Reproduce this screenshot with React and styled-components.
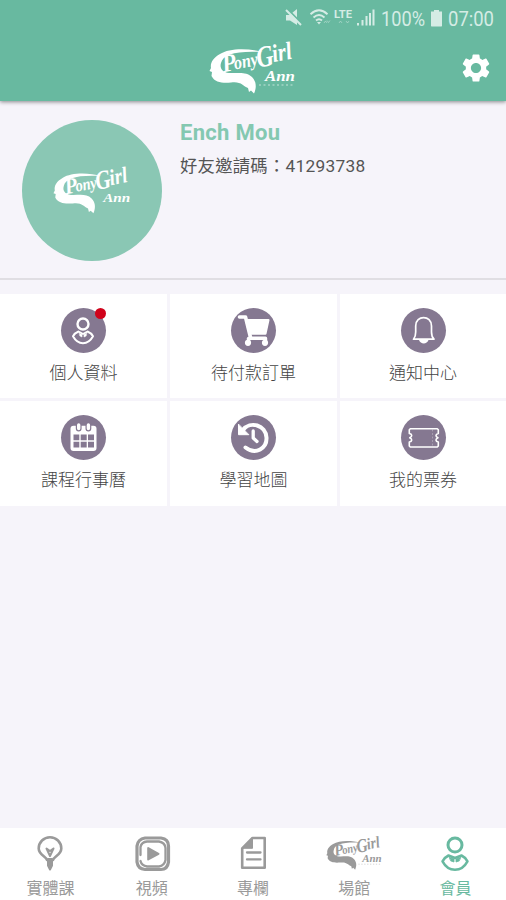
import React from "react"
import styled, { createGlobalStyle, ThemeProvider } from "styled-components"
import { MdSettings } from "react-icons/md"

const theme = {
  color: {
    primary: "#68b9a0",
    primaryLight: "#8ac7b4",
    background: "#f6f4fa",
    badge: "#857891",
    status: "#d5ece5",
    muted: "#9a9a9a",
    alert: "#d0021b"
  }
}

const GlobalStyle = createGlobalStyle`
  * {
    box-sizing: border-box;
  }

  body {
    margin: 0;
    font-family: Roboto, "Noto Sans CJK TC", sans-serif;
  }

  svg {
    display: block;
    flex: none;
    overflow: visible;
  }
`

const StyledPage = styled.div`
  display: flex;
  flex-direction: column;
  height: 900px;
  width: 506px;
  overflow: hidden;
  background: ${({ theme }) => theme.color.background};
`

const StyledHeader = styled.header`
  flex: none;
  height: 101px;
  color: #fff;
  background: ${({ theme }) => theme.color.primary};
  box-shadow: 0 1px 4px rgba(0, 0, 0, 0.45);
`

const StyledStatusBar = styled.div`
  display: flex;
  justify-content: flex-end;
  align-items: center;
  height: 36px;
  padding-right: 12px;
  color: ${({ theme }) => theme.color.status};
`

const StyledStatusText = styled.svg`
  margin-left: ${({ $gap }) => $gap}px;
  font-size: 20px;
  fill: currentColor;
`

const StyledToolbar = styled.div`
  display: grid;
  grid-template-columns: 1fr 88px 1fr;
  align-items: center;
  height: 64px;
  padding: 0 13px 0 12px;
`

const StyledSettings = styled.div`
  grid-column: 3;
  justify-self: end;
`

const StyledToolbarLogo = styled.div`
  grid-column: 2;
`

const StyledProfile = styled.section`
  display: flex;
  flex: none;
  height: 179px;
  padding: 19px 22px 0;
  border-bottom: 2px solid #e0dee3;
`

const StyledAvatar = styled.div`
  display: flex;
  align-items: center;
  justify-content: center;
  flex: none;
  width: 140px;
  height: 141px;
  margin-right: 18px;
  border-radius: 50%;
  color: #fff;
  background: ${({ theme }) => theme.color.primaryLight};
`

const StyledName = styled.h1`
  margin: 0;
  padding-top: 1px;
  font-size: 22px;
  line-height: 24px;
  font-weight: 700;
  letter-spacing: 0.3px;
  color: #84c8b1;
`

const StyledCode = styled.p`
  margin: 8px 0 0;
  font-size: 17.3px;
  line-height: 26px;
  letter-spacing: 0.3px;
  color: #555;
`

const StyledMenu = styled.nav`
  display: grid;
  flex: none;
  grid-template-columns: 167px 167px 166px;
  grid-template-rows: 104px 105px;
  gap: 3px;
  margin-top: 14px;
`

const StyledMenuItem = styled.div`
  display: flex;
  flex-direction: column;
  align-items: center;
  padding-top: 14px;
  background: #fff;
`

const StyledBadge = styled.div`
  position: relative;
  width: 45px;
  height: 45px;
  border-radius: 50%;
  color: #fff;
  background: ${({ theme }) => theme.color.badge};
`

const StyledDot = styled.span`
  position: absolute;
  top: 0;
  right: 0;
  width: 11px;
  height: 11px;
  border-radius: 50%;
  background: ${({ theme }) => theme.color.alert};
`

const StyledMenuLabel = styled.span`
  margin-top: 7px;
  font-size: 17px;
  line-height: 26px;
  font-weight: 300;
  color: #444;
`

const StyledTabs = styled.nav`
  display: grid;
  flex: none;
  grid-template-columns: repeat(5, 1fr);
  height: 72px;
  margin-top: auto;
  background: #fff;
`

const StyledTab = styled.div`
  display: flex;
  flex-direction: column;
  align-items: center;
  padding-top: 7px;
  font-size: 16px;
  line-height: 24px;
  color: ${({ theme, $active }) =>
    $active ? theme.color.primary : theme.color.muted};
`

const StyledTabIcon = styled.div`
  display: flex;
  align-items: center;
  height: 36px;
  margin-bottom: 6px;
`

const StyledLogo = styled.svg`
  font-family: "Liberation Serif", serif;
  font-style: italic;
  font-weight: 700;
  fill: currentColor;
`

const Logo = ({ width, tagline }) => (
  <StyledLogo width={width} height={(width * 50) / 88} viewBox="0 0 88 50">
    <path d="M54 9C39 5 20 5 11 11C4 15 1 20 2 25L0.500 28L3 29L2.500 33C6 40 14 40 22 39.500C32 38 34 43 39 45L40 49L42 47.500L45 50.500C48 44 47 38 43 34C37 28 29 30.500 20 30C13 29 10.500 25 12 20C14 11 28 7.500 54 9Z" />
    <g transform="rotate(-11 16 27)">
      <text x="14" y="29" fontSize="25" textLength="14" lengthAdjust="spacingAndGlyphs">P</text>
      <text x="26" y="28.500" fontSize="19" textLength="24" lengthAdjust="spacingAndGlyphs">ony</text>
      <text x="49" y="31" fontSize="30" textLength="17" lengthAdjust="spacingAndGlyphs">G</text>
      <text x="65" y="28.500" fontSize="25" textLength="20" lengthAdjust="spacingAndGlyphs">irl</text>
    </g>
    <text x="56" y="38" fontSize="15" textLength="30" lengthAdjust="spacingAndGlyphs">Ann</text>
    {tagline && (
      <path d="M50 42H86" fill="none" stroke="currentColor" strokeWidth="1.500" strokeDasharray="2 2.500" opacity="0.4" />
    )}
  </StyledLogo>
)

const Icon = ({ size = 45, children }) => (
  <svg
    width={size}
    height={size}
    viewBox={`0 0 ${size} ${size}`}
    fill="none"
    stroke="currentColor"
    strokeWidth="2"
    strokeLinecap="round"
    strokeLinejoin="round"
  >
    {children}
  </svg>
)

const PersonIcon = () => (
  <Icon>
    <circle cx="22" cy="16" r="5.500" strokeWidth="2.400" />
    <path d="M17.500 23.500C15 24.500 13 26.300 12 28.300C17 37.500 27 37.500 32 28.300C31 26.300 29 24.500 26.500 23.500L22 26Z" strokeWidth="2" />
    <path d="M18.500 25.500L21 26.500V29L19 28ZM25.500 25.500L23 26.500V29L25 28Z" fill="currentColor" strokeWidth="0.600" />
  </Icon>
)

const CartIcon = () => (
  <Icon>
    <path d="M8.500 9H14.500L19.500 29.500" strokeWidth="3.600" />
    <path d="M15 12H37.500L34.500 25.700H18.500Z" fill="currentColor" />
    <path d="M18.500 30.300H34.500V34" strokeWidth="3.400" />
    <path d="M17.500 30.500V34" strokeWidth="3.400" />
    <circle cx="17" cy="34.800" r="3.100" fill="currentColor" stroke="none" />
    <circle cx="34" cy="34.800" r="3.100" fill="currentColor" stroke="none" />
  </Icon>
)

const BellIcon = () => (
  <Icon>
    <path
      d="M12.500 31.200C14.500 29 14.700 27 14.700 24V18C14.700 6.800 30.500 6.800 30.500 18V24C30.500 27 30.700 29 33 31.200Z"
      strokeWidth="1.700"
    />
    <path d="M18 32C19.500 36.500 26 36.500 27.500 32Z" fill="currentColor" stroke="none" />
  </Icon>
)

const CalendarIcon = () => (
  <Icon>
    <rect x="9.500" y="10.800" width="26" height="25.200" rx="3" fill="currentColor" stroke="none" />
    <path d="M17.700 10V13.500M27.400 10V13.500" stroke={theme.color.badge} strokeWidth="5.800" />
    <path d="M17.700 10V13.500M27.400 10V13.500" strokeWidth="3.400" />
    <path
      d="M12.500 19.500h5.800v5.800h-5.800zM19.700 19.500h6v5.800h-6zM27 19.500h6v5.800h-6zM12.500 26.800h5.800v5.800h-5.800zM19.700 26.800h6v5.800h-6zM27 26.800h6v5.800h-6z"
      fill={theme.color.badge}
      stroke="none"
    />
  </Icon>
)

const HistoryIcon = () => (
  <Icon>
    <path d="M14.500 32.500C25 40.500 36 33 35.500 22.700C35 10 19 5.500 12 15" strokeWidth="4" />
    <path d="M7.500 9.500V19.700H17.500Z" fill="currentColor" strokeWidth="1" />
    <path d="M22.200 16V23L26 26.500" strokeWidth="3.300" />
  </Icon>
)

const TicketIcon = () => (
  <Icon>
    <path
      d="M9.300 13.700H36.300L37.300 14.700V18.500C34.500 19 34 21.500 37 22.700C34 24 34.500 26.500 37.300 27V31L36.300 32H9.300L8.300 31V27C11.200 26.500 11.700 24 8.700 22.700C11.700 21.500 11.200 19 8.300 18.500V14.700Z"
      strokeWidth="1.600"
    />
    <path d="M31.500 15V31" strokeWidth="1" strokeDasharray="1 2.500" opacity="0.3" />
  </Icon>
)

const BulbIcon = () => (
  <Icon size={36}>
    <path d="M14 25C13.500 21.500 5.700 20 5.700 13.500A11.300 11.300 0 0 1 28.300 13.500C28.300 20 20.500 21.500 20 25" strokeWidth="2.600" />
    <path d="M15 24V30.500L17 34.500L19 30.500V24Z" fill="currentColor" />
    <path d="M13.500 13.500L17 21L20.500 13.500L17 16Z" strokeWidth="2" />
  </Icon>
)

const VideoIcon = () => (
  <Icon size={36}>
    <path d="M11 3H27Q34.500 4 34.500 11V27Q33.500 34.500 27 34.500H11Q4 34 3 27V11Q4 4 11 3Z" strokeWidth="3.200" />
    <path d="M6.500 20V12Q7.500 7 13 6.500H25Q31 7.500 31.500 13V25Q30.500 30.500 25 31.500H13Q7.500 30.500 6.500 26" strokeWidth="2.300" />
    <path d="M14.200 13L24.500 18.800L14.200 24.500Z" fill="currentColor" />
  </Icon>
)

const DocumentIcon = () => (
  <Icon size={36}>
    <path d="M17.500 3H29.700V32.800H7.200V13.300Z" strokeWidth="2.600" />
    <path d="M17.500 3V13.300H7.200Z" fill="currentColor" strokeWidth="1" />
    <path d="M12 17.500H25.500M12 24.400H25.500" strokeWidth="2.300" />
  </Icon>
)

const MemberIcon = () => (
  <Icon size={36}>
    <circle cx="18" cy="10" r="7" strokeWidth="3" />
    <path d="M11.500 20.500C9 21.700 6.700 24 5.500 26.300C11.500 37.500 24.500 37.500 30.500 26.300C29.300 24 27 21.700 24.500 20.500L18 23Z" strokeWidth="2.500" />
    <path d="M12.500 22.500L17 24V27L14 26ZM23.500 22.500L19 24V27L22 26Z" fill="currentColor" strokeWidth="0.800" />
  </Icon>
)

const StatusIcons = () => (
  <svg width="90" height="20" viewBox="0 0 90 20" fill="none" stroke="currentColor">
    <path d="M1 7H4.500L12 1V17L5 12.500H1Z" fill="currentColor" stroke="none" />
    <path d="M2.500 1L17 16" stroke={theme.color.primary} strokeWidth="1.800" />
    <path d="M1 2L16 17" strokeWidth="2" />
    <path d="M25.500 6.200Q34 -1.500 42.500 6.200M28.500 9.500Q34 4.500 39.500 9.500M31 12.500Q34 9.800 37 12.500" strokeWidth="1.900" />
    <path d="M32 14L34 16.500L36 14Z" fill="currentColor" stroke="none" />
    <path d="M39 15L40.500 13L42 15M42 12.500L43.500 14.500L45 12.500" opacity="0.45" />
    <text x="49" y="9.500" fontSize="11.500" fontWeight="700" textLength="18" lengthAdjust="spacingAndGlyphs" fill="currentColor" stroke="none">
      LTE
    </text>
    <path d="M54 15L55.500 13L57 15M61 13L62.500 15L64 13" opacity="0.45" />
    <path d="M73 15V17.500M77.500 12V17.500M81.500 8V17.500M85 5V17.500M88.500 1.500V17.500" strokeWidth="2" />
  </svg>
)

const BatteryIcon = styled.div`
  width: 11px;
  height: 17px;
  margin-left: 6px;
  border-radius: 1px;
  background: currentColor;
  clip-path: polygon(0 2px, 3px 2px, 3px 0, 8px 0, 8px 2px, 100% 2px, 100% 100%, 0 100%);
`

const StatusText = ({ width, gap, children }) => (
  <StyledStatusText $gap={gap} width={width} height="24">
    <text x="0" y="19.500" textLength={width} lengthAdjust="spacingAndGlyphs">
      {children}
    </text>
  </StyledStatusText>
)

const menuItems = [
  { label: "個人資料", icon: <PersonIcon />, unread: true },
  { label: "待付款訂單", icon: <CartIcon /> },
  { label: "通知中心", icon: <BellIcon /> },
  { label: "課程行事曆", icon: <CalendarIcon /> },
  { label: "學習地圖", icon: <HistoryIcon /> },
  { label: "我的票券", icon: <TicketIcon /> }
]

const tabs = [
  { label: "實體課", icon: <BulbIcon /> },
  { label: "視頻", icon: <VideoIcon /> },
  { label: "專欄", icon: <DocumentIcon /> },
  { label: "場館", icon: <Logo width={57} tagline /> },
  { label: "會員", icon: <MemberIcon />, active: true }
]

export default () => (
  <ThemeProvider theme={theme}>
    <GlobalStyle />
    <StyledPage>
      <StyledHeader>
        <StyledStatusBar>
          <StatusIcons />
          <StatusText width={44} gap={6}>
            100%
          </StatusText>
          <BatteryIcon />
          <StatusText width={46} gap={6}>
            07:00
          </StatusText>
        </StyledStatusBar>
        <StyledToolbar>
          <StyledToolbarLogo>
            <Logo width={88} tagline />
          </StyledToolbarLogo>
          <StyledSettings>
            <MdSettings size={34} />
          </StyledSettings>
        </StyledToolbar>
      </StyledHeader>

      <StyledProfile>
        <StyledAvatar>
          <Logo width={79} />
        </StyledAvatar>
        <div>
          <StyledName>Ench Mou</StyledName>
          <StyledCode>好友邀請碼：41293738</StyledCode>
        </div>
      </StyledProfile>

      <StyledMenu>
        {menuItems.map(({ label, icon, unread }) => (
          <StyledMenuItem key={label}>
            <StyledBadge>
              {icon}
              {unread && <StyledDot />}
            </StyledBadge>
            <StyledMenuLabel>{label}</StyledMenuLabel>
          </StyledMenuItem>
        ))}
      </StyledMenu>

      <StyledTabs>
        {tabs.map(({ label, icon, active }) => (
          <StyledTab key={label} $active={active}>
            <StyledTabIcon>{icon}</StyledTabIcon>
            {label}
          </StyledTab>
        ))}
      </StyledTabs>
    </StyledPage>
  </ThemeProvider>
)
